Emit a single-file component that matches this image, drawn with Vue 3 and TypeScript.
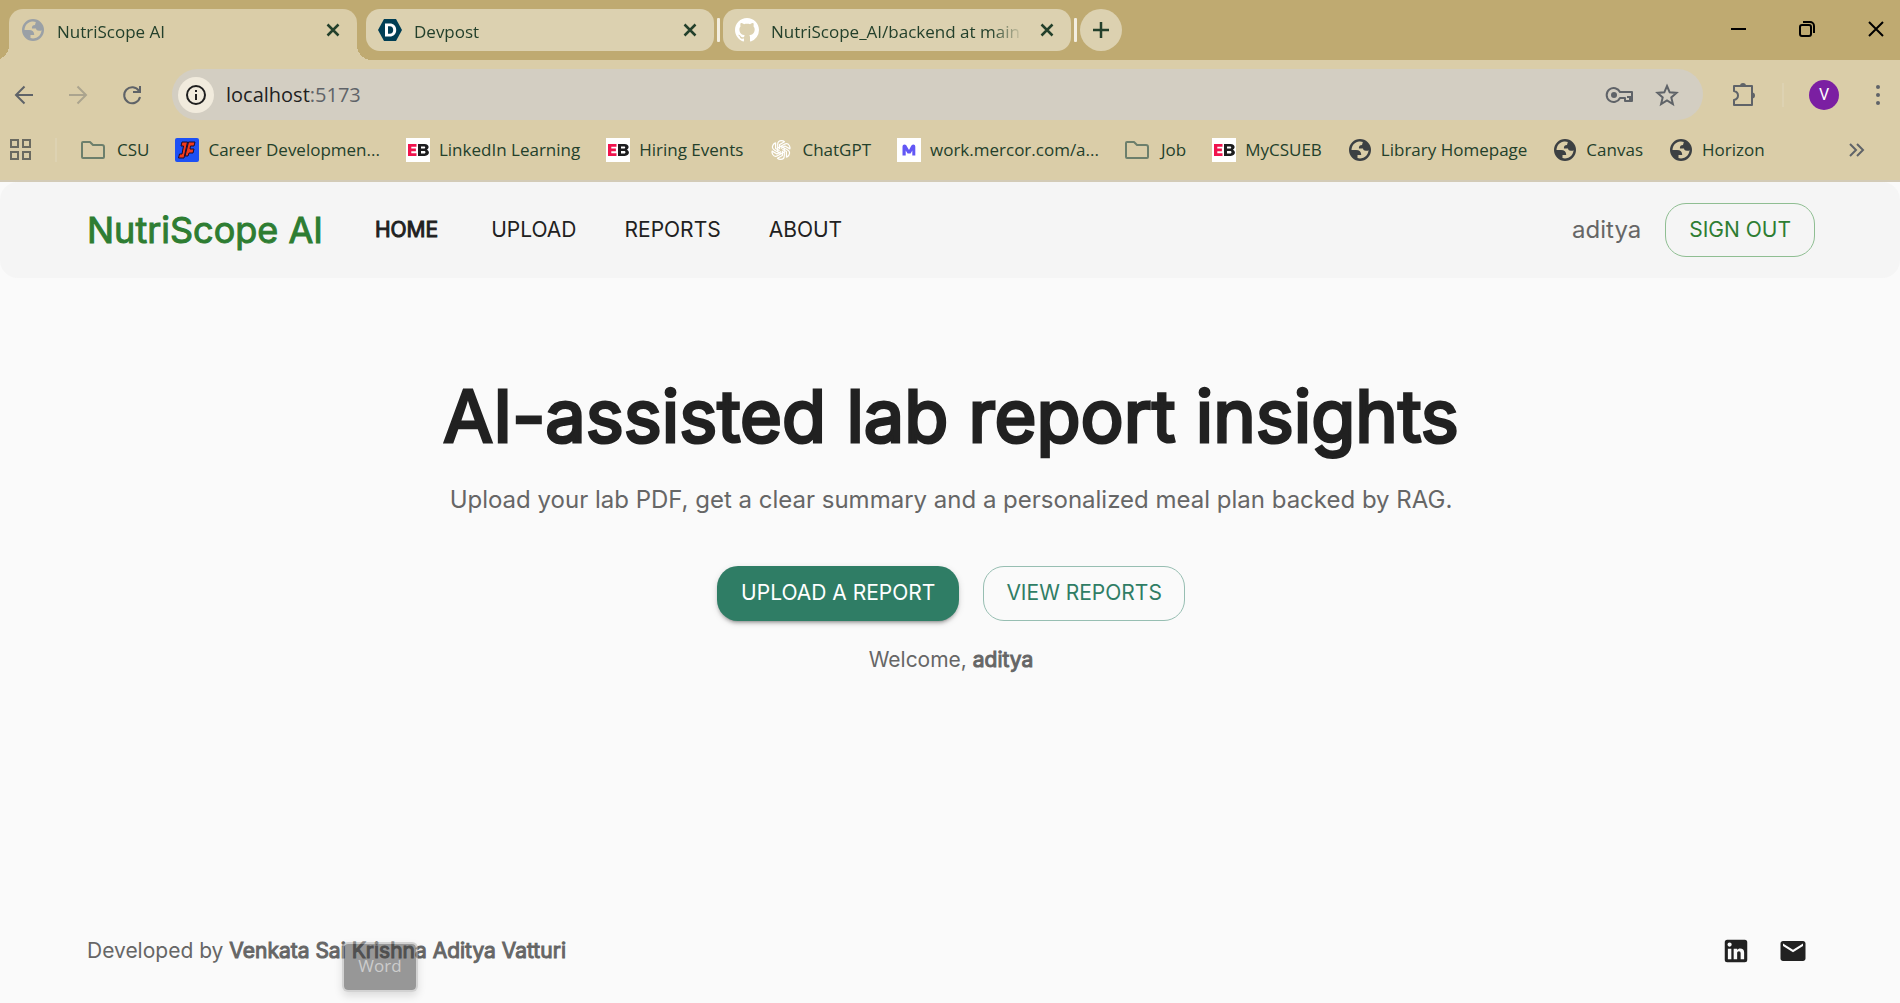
<script setup lang="ts">
import { ref } from 'vue'

type IconKind = 'globe' | 'devpost' | 'github' | 'folder' | 'career' | 'eb' | 'openai' | 'mercor'

interface Tab {
  title: string
  icon: IconKind
  active?: boolean
}

interface Bookmark {
  label: string
  icon: IconKind
}

const tabs: Tab[] = [
  { title: 'NutriScope AI', icon: 'globe', active: true },
  { title: 'Devpost', icon: 'devpost' },
  { title: 'NutriScope_AI/backend at main', icon: 'github' },
]

const bookmarks: Bookmark[] = [
  { label: 'CSU', icon: 'folder' },
  { label: 'Career Developmen...', icon: 'career' },
  { label: 'LinkedIn Learning', icon: 'eb' },
  { label: 'Hiring Events', icon: 'eb' },
  { label: 'ChatGPT', icon: 'openai' },
  { label: 'work.mercor.com/a...', icon: 'mercor' },
  { label: 'Job', icon: 'folder' },
  { label: 'MyCSUEB', icon: 'eb' },
  { label: 'Library Homepage', icon: 'globe' },
  { label: 'Canvas', icon: 'globe' },
  { label: 'Horizon', icon: 'globe' },
]

const links = ['Home', 'Upload', 'Reports', 'About']
const current = ref('Home')
const user = 'aditya'
const petals = [0, 60, 120, 180, 240, 300]
</script>

<template>
  <div class="window">
    <svg class="defs" width="0" height="0" aria-hidden="true">
      <symbol id="i-globe" viewBox="0 0 24 24">
        <path fill="currentColor" fill-rule="evenodd" d="M12 1a11 11 0 1 0 0 22a11 11 0 0 0 0-22zM3.500 12H8C11.600 12 13.300 13.800 13.200 17H9.500V20.100A8.500 8.500 0 0 0 20.500 12C20 12.800 19.300 13 18 12.800C15.500 12.500 15.200 11.500 15 10.500H11C10.600 8.500 11.500 7.300 14 7C14.600 5.500 14.300 4.800 15 4A8.500 8.500 0 0 0 3.500 12z" />
      </symbol>
      <symbol id="i-devpost" viewBox="0 0 24 24">
        <path fill="#003e54" d="M6 1h12l6 11-6 11H6L0 12z" />
        <path fill="#fff" fill-rule="evenodd" d="M7 5.500h4.700c4 0 6.500 2.500 6.500 6.500s-2.600 6.500-6.500 6.500H7zM10 8.300v7.400h1.800c2.200 0 3.400-1.400 3.400-3.700s-1.200-3.700-3.400-3.700z" />
      </symbol>
      <symbol id="i-github" viewBox="0 0 16 16">
        <path fill="#fff" d="M8 0C3.580 0 0 3.580 0 8c0 3.540 2.290 6.530 5.470 7.590.4.070.55-.17.55-.38 0-.19-.01-.82-.01-1.490-2.010.37-2.530-.49-2.690-.94-.09-.23-.48-.94-.82-1.130-.28-.15-.68-.52-.01-.53.63-.01 1.080.58 1.230.82.72 1.210 1.870.87 2.330.66.07-.52.28-.87.51-1.070-1.780-.2-3.640-.89-3.640-3.950 0-.87.31-1.590.82-2.150-.08-.2-.36-1.020.08-2.120 0 0 .67-.21 2.200.82.64-.18 1.320-.27 2-.27s1.360.09 2 .27c1.530-1.040 2.200-.82 2.200-.82.44 1.100.16 1.920.08 2.120.51.56.82 1.270.82 2.150 0 3.070-1.870 3.750-3.650 3.950.29.25.54.73.54 1.480 0 1.070-.01 1.930-.01 2.200 0 .21.15.46.55.38A8.010 8.010 0 0 0 16 8c0-4.420-3.580-8-8-8z" />
      </symbol>
      <symbol id="i-folder" viewBox="0 0 24 24">
        <path fill="none" stroke="#6c7f6c" stroke-width="2" stroke-linejoin="round" d="M3 4h6l3 3h9a2 2 0 0 1 2 2v10a1 1 0 0 1-1 1H2a1 1 0 0 1-1-1V5a1 1 0 0 1 1-1z" />
      </symbol>
      <symbol id="i-career" viewBox="0 0 24 24">
        <rect width="24" height="24" rx="2" fill="#1c50f5" />
        <path fill="#f23a1d" stroke="#170b2e" stroke-width="1" d="M7 4h5.500L9 20H3.500l1-4H7l1.500-8H6zM13.500 4H20l-1 4h-3.500l-.5 3h4l-1 4h-4l-1 3h-3z" />
      </symbol>
      <symbol id="i-eb" viewBox="0 0 24 24">
        <path fill="#fff" d="M0 0h24v24H0z" />
        <path fill="#f0134d" d="M2 6h8.500v2.700H5.300v1.900h4.600v2.600H5.300v2.100h5.200V18H2z" />
        <path fill="#1d1d1f" fill-rule="evenodd" d="M12 6h6.500c5 0 5 4.600 2.300 5.700 3.400 1.300 2.700 6.300-2.100 6.300H12zM15 8.400v2.200h3c1.600 0 1.600-2.200 0-2.200zM15 13v2.500h3.200c1.700 0 1.700-2.500 0-2.500z" />
      </symbol>
      <symbol id="i-openai" viewBox="0 0 24 24">
        <g fill="none" stroke="#fff" stroke-width="1.200" stroke-linejoin="round">
          <path v-for="a in petals" :key="a" :transform="`rotate(${a} 12 12)`" d="M8.700 13.900V6.600Q8.700 2.600 12.500 2.600Q14.300 2.600 15.500 3.700L10.600 6.600V11.200" />
        </g>
      </symbol>
      <symbol id="i-mercor" viewBox="0 0 24 24">
        <rect width="24" height="24" fill="#fff" />
        <path fill="#6257f5" d="M5.500 17.500V8.500q0-2 2-2t2.300 1.800L12 12l2-3.700q.6-1.800 2.300-1.800 2 0 2 2v9h-3v-5l-1.700 3h-3l-1.900-3v5z" />
      </symbol>
      <symbol id="i-close" viewBox="0 0 24 24">
        <path fill="none" stroke="currentColor" stroke-width="2.500" d="M6.500 6.500l11 11M17.500 6.500l-11 11" />
      </symbol>
    </svg>

    <header class="chrome">
      <div class="tabstrip">
        <div v-for="tab in tabs" :key="tab.title" class="tab" :class="{ active: tab.active }">
          <svg class="fav" aria-hidden="true"><use :href="'#i-' + tab.icon" /></svg>
          <span class="tab-title">{{ tab.title }}</span>
          <button class="icon-btn" :aria-label="'Close ' + tab.title"><svg width="24" height="24"><use href="#i-close" /></svg></button>
        </div>
        <button class="new-tab" aria-label="New tab">
          <svg width="24" height="24" viewBox="0 0 24 24"><path stroke="currentColor" stroke-width="2.500" d="M12 4v16M4 12h16" /></svg>
        </button>
        <div class="controls">
          <button class="icon-btn" aria-label="Minimize"><svg width="24" height="24" viewBox="0 0 24 24"><path stroke="#000" stroke-width="2" d="M5 12h15" /></svg></button>
          <button class="icon-btn" aria-label="Restore"><svg width="24" height="24" viewBox="0 0 24 24"><g fill="none" stroke="#000" stroke-width="2"><rect x="5" y="8" width="11" height="11" rx="2" /><path d="M8 5h7a4 4 0 0 1 4 4v7" /></g></svg></button>
          <button class="icon-btn" aria-label="Close window"><svg width="24" height="24" viewBox="0 0 24 24"><path stroke="#000" stroke-width="2" d="M5 5l14 14M19 5L5 19" /></svg></button>
        </div>
      </div>

      <div class="toolbar">
        <div class="nav-btns">
          <button class="icon-btn" aria-label="Back"><svg width="24" height="24" viewBox="0 0 24 24"><path fill="none" stroke="#5f6368" stroke-width="2" d="M21 12H4M12.500 3.500L4 12l8.500 8.500" /></svg></button>
          <button class="icon-btn" aria-label="Forward"><svg width="24" height="24" viewBox="0 0 24 24"><path fill="none" stroke="#aba48e" stroke-width="2" d="M3 12h17M11.500 3.500L20 12l-8.500 8.500" /></svg></button>
          <button class="icon-btn" aria-label="Reload"><svg width="24" height="24" viewBox="0 0 24 24"><path fill="none" stroke="#5f6368" stroke-width="2" d="M19 8A8 8 0 1 0 20 14M20 3v6h-7" /></svg></button>
        </div>
        <div class="omnibox">
          <button class="site-info" aria-label="View site information">
            <svg width="24" height="24" viewBox="0 0 24 24"><circle cx="12" cy="12" r="9" fill="none" stroke="#1f1f1f" stroke-width="2" /><path fill="#1f1f1f" d="M11 7h2v2h-2zM11 11h2v6h-2z" /></svg>
          </button>
          <span class="url">localhost<span>:5173</span></span>
          <button class="icon-btn" aria-label="Passwords">
            <svg width="30" height="24" viewBox="0 0 30 24"><g fill="none" stroke="#5f6368" stroke-width="2"><path d="M15 9A7 7 0 1 0 15 15H20V18H27V9z" stroke-linejoin="round" /><path d="M22 14h3v4" /></g><circle cx="9" cy="12" r="3" fill="#5f6368" /></svg>
          </button>
          <button class="icon-btn" aria-label="Bookmark this page">
            <svg width="24" height="24" viewBox="0 0 24 24"><path fill="none" stroke="#5f6368" stroke-width="2" d="M12 3l2.700 6.300 6.800.6-5.200 4.500 1.600 6.700L12 17.500l-5.900 3.600 1.600-6.700L2.500 9.900l6.800-.6z" /></svg>
          </button>
        </div>
        <div class="tools">
          <button class="icon-btn" aria-label="Extensions">
            <svg width="26" height="26" viewBox="0 0 26 26"><path fill="none" stroke="#5f6368" stroke-width="2" stroke-linejoin="round" d="M3 4h18v19H3v-5q4-1 4-4.500T3 9z" /><path fill="#5f6368" d="M9 4a3 3 0 0 1 6 0zM21 10.500a3 3 0 0 1 0 6z" /></svg>
          </button>
          <span class="divider"></span>
          <button class="avatar" aria-label="Profile">V</button>
          <button class="icon-btn" aria-label="Menu"><svg width="24" height="24" viewBox="0 0 24 24" fill="#5f6368"><circle cx="12" cy="4" r="2" /><circle cx="12" cy="12" r="2" /><circle cx="12" cy="20" r="2" /></svg></button>
        </div>
      </div>

      <nav class="bookmarks" aria-label="Bookmarks">
        <button class="icon-btn" aria-label="Tab groups">
          <svg width="24" height="24" viewBox="0 0 24 24"><g fill="none" stroke="#6a6a60" stroke-width="2"><path d="M2 2h7v7H2zM14 2h7v7h-7zM2 14h7v7H2zM14 14h7v7h-7z" /></g></svg>
        </button>
        <span class="divider"></span>
        <a v-for="b in bookmarks" :key="b.label" class="bookmark" :class="b.icon" href="#">
          <svg class="fav" aria-hidden="true"><use :href="'#i-' + b.icon" /></svg><span>{{ b.label }}</span>
        </a>
        <button class="icon-btn more" aria-label="More bookmarks">
          <svg width="24" height="24" viewBox="0 0 24 24"><path fill="none" stroke="#5f6368" stroke-width="2" d="M5 6l6 6-6 6M12 6l6 6-6 6" /></svg>
        </button>
      </nav>
    </header>

    <div class="app">
      <header class="appbar">
        <a class="brand" href="#">NutriScope AI</a>
        <nav class="links" aria-label="Main">
          <a v-for="l in links" :key="l" href="#" :class="{ current: l === current }" @click.prevent="current = l">{{ l }}</a>
        </nav>
        <span class="user">{{ user }}</span>
        <button class="btn outline green">Sign out</button>
      </header>

      <main class="hero">
        <h1>AI-assisted lab report insights</h1>
        <p class="lead">Upload your lab PDF, get a clear summary and a personalized meal plan backed by RAG.</p>
        <div class="actions">
          <button class="btn solid">Upload a report</button>
          <button class="btn outline">View reports</button>
        </div>
        <p class="welcome">Welcome, <strong>{{ user }}</strong></p>
      </main>

      <footer class="footer">
        <p>Developed by <strong>Venkata Sai Krishna Aditya Vatturi</strong></p>
        <div class="social">
          <a href="#" aria-label="LinkedIn"><svg width="30" height="30" viewBox="0 0 24 24"><path fill="#212121" d="M19 3a2 2 0 0 1 2 2v14a2 2 0 0 1-2 2H5a2 2 0 0 1-2-2V5a2 2 0 0 1 2-2h14m-.5 15.500v-5.300a3.260 3.260 0 0 0-3.260-3.260c-.85 0-1.840.52-2.320 1.300v-1.110h-2.790v8.370h2.790v-4.930c0-.77.62-1.400 1.390-1.400a1.400 1.400 0 0 1 1.400 1.400v4.930h2.790M6.880 8.560a1.680 1.680 0 0 0 1.680-1.680c0-.93-.75-1.690-1.680-1.690a1.690 1.690 0 0 0-1.690 1.690c0 .93.76 1.680 1.690 1.680m1.390 9.940v-8.370H5.500v8.370h2.770z" /></svg></a>
          <a href="#" aria-label="Email"><svg width="30" height="30" viewBox="0 0 24 24"><path fill="#212121" d="M20 4H4c-1.100 0-1.990.9-1.990 2L2 18c0 1.100.9 2 2 2h16c1.100 0 2-.9 2-2V6c0-1.100-.9-2-2-2zm0 4l-8 5-8-5V6l8 5 8-5v2z" /></svg></a>
        </div>
        <div class="tooltip" role="tooltip">Word</div>
      </footer>
    </div>
  </div>
</template>

<style>
html,
body {
  margin: 0;
  background: #fafafa;
}
</style>

<style scoped>
* {
  box-sizing: border-box;
}
.window {
  display: flex;
  flex-direction: column;
  min-height: 100vh;
  font-family: Inter, sans-serif;
}
.defs {
  position: absolute;
}
button {
  margin: 0;
  padding: 0;
  border: 0;
  background: none;
  font: inherit;
  color: inherit;
}
a {
  color: inherit;
  text-decoration: none;
}
svg {
  display: block;
}
p {
  margin: 0;
}
.chrome {
  background: #dacda8;
  border-bottom: 2px solid #d3cbb7;
  color: #23402b;
  font-family: "Segoe UI", "Open Sans", "Noto Sans", sans-serif;
  font-size: 17px;
}
.icon-btn {
  display: flex;
  flex: none;
}
.fav {
  flex: none;
  width: 24px;
  height: 24px;
}
.tabstrip {
  display: flex;
  align-items: flex-start;
  height: 60px;
  padding: 9px 0 0 9px;
  background: #bfaa71;
}
.tab {
  position: relative;
  display: flex;
  align-items: center;
  width: 348px;
  height: 42px;
  margin-right: 9px;
  padding: 0 12px;
  border-radius: 14px;
  background: #dcd1b0;
}
.tab:not(.active)::after {
  content: "";
  position: absolute;
  right: -6px;
  width: 3px;
  height: 24px;
  border-radius: 1px;
  background: #f3eee0;
}
.tab.active {
  height: 51px;
  padding-bottom: 9px;
  border-radius: 14px 14px 0 0;
  background: #dacda8;
}
.tab.active::before,
.tab.active::after {
  content: "";
  position: absolute;
  bottom: 0;
  width: 15px;
  height: 15px;
}
.tab.active::before {
  right: 100%;
  background: radial-gradient(circle at 0 0, transparent 15px, #dacda8 15px);
}
.tab.active::after {
  left: 100%;
  background: radial-gradient(circle at 100% 0, transparent 15px, #dacda8 15px);
}
.tab.active .fav {
  color: #9aa0a6;
}
.tab-title {
  flex: 1;
  overflow: hidden;
  margin: 2px 8px 0 12px;
  white-space: nowrap;
  mask-image: linear-gradient(to right, #000 220px, transparent 252px);
}
.new-tab {
  display: grid;
  place-items: center;
  width: 42px;
  height: 42px;
  border-radius: 50%;
  background: #dcd1b0;
}
.controls {
  display: flex;
  gap: 45px;
  margin: 8px 12px 0 auto;
}
.toolbar {
  display: flex;
  align-items: center;
  padding: 9px 10px 0 12px;
}
.nav-btns {
  display: flex;
  gap: 30px;
}
.omnibox {
  display: flex;
  flex: 1;
  align-items: center;
  gap: 20px;
  height: 51px;
  margin-left: 28px;
  padding: 0 24px 0 6px;
  border-radius: 26px;
  background: #d3cec2;
}
.site-info {
  display: grid;
  place-items: center;
  width: 36px;
  height: 36px;
  border-radius: 50%;
  background: #f1ebdd;
}
.url {
  flex: 1;
  margin-left: -8px;
  color: #1f1f1f;
  font-size: 20px;
}
.url span {
  color: #5f6368;
}
.tools {
  display: flex;
  align-items: center;
  gap: 25px;
  margin-left: 28px;
}
.divider {
  width: 2px;
  height: 24px;
  background: #ddd2b2;
}
.avatar {
  width: 30px;
  height: 30px;
  border-radius: 50%;
  background: #7b1fa2;
  color: #fff;
  font-family: Roboto, sans-serif;
  font-size: 16px;
}
.avatar + .icon-btn {
  margin-left: 2px;
}
.bookmarks {
  display: flex;
  align-items: center;
  height: 60px;
  padding: 0 31px 0 9px;
}
.bookmarks .divider {
  margin: 0 24px 0 22px;
}
.bookmark {
  display: flex;
  align-items: center;
  gap: 9px;
  margin-right: 26px;
  white-space: nowrap;
}
.bookmark span {
  padding-bottom: 2px;
}
.bookmark.folder {
  gap: 12px;
}
.bookmark.globe .fav {
  color: #3c4043;
}
.more {
  margin-left: auto;
}
.app {
  display: flex;
  flex: 1;
  flex-direction: column;
  color: #212121;
}
.appbar {
  display: flex;
  align-items: center;
  height: 96px;
  padding: 0 85px 0 87px;
  border-radius: 18px;
  background: #f5f5f5;
}
.brand {
  color: #2e7d32;
  font-size: 36px;
  -webkit-text-stroke: 1px #2e7d32;
}
.links {
  display: flex;
  flex: 1;
  gap: 48px;
  margin-left: 52px;
  padding-bottom: 2px;
  font-size: 21px;
  text-transform: uppercase;
}
.links .current {
  margin-right: 5px;
  -webkit-text-stroke: 1px #212121;
}
.user {
  margin-right: 24px;
  padding-bottom: 2px;
  color: #666;
  font-size: 24px;
}
.btn {
  height: 54px;
  padding: 0 24px 2px;
  border-radius: 21px;
  font-size: 21px;
  text-transform: uppercase;
}
.btn.outline {
  padding: 0 22px 2px;
  border: 1px solid #97beb2;
  color: #2f7d65;
}
.btn.outline.green {
  padding: 0 23px 2px;
  border-color: #8fbe92;
  color: #2e7d32;
}
.btn.solid {
  background: #2f7d65;
  color: #fff;
  box-shadow: 0 4px 2px -3px rgba(0, 0, 0, 0.2), 0 3px 3px rgba(0, 0, 0, 0.14), 0 2px 7px rgba(0, 0, 0, 0.12);
}
.actions .btn {
  height: 55px;
}
.hero {
  display: flex;
  flex: 1;
  flex-direction: column;
  align-items: center;
  padding: 93px 0 0 2px;
  text-align: center;
}
h1 {
  margin: 0;
  font-size: 72px;
  font-weight: 400;
  line-height: 90px;
  -webkit-text-stroke: 3px #212121;
}
.lead {
  margin-top: 21px;
  color: #666;
  font-size: 24px;
  line-height: 36px;
}
.actions {
  display: flex;
  gap: 24px;
  margin-top: 48px;
}
.welcome {
  margin-top: 24px;
  color: #666;
  font-size: 21px;
  line-height: 30px;
}
strong {
  font-weight: 400;
  -webkit-text-stroke: 1px #666;
}
.footer {
  position: relative;
  display: flex;
  align-items: center;
  justify-content: space-between;
  height: 104px;
  padding: 0 92px 0 87px;
  color: #666;
  font-size: 21px;
}
.footer p {
  padding-bottom: 2px;
}
.social {
  display: flex;
  gap: 27px;
}
.tooltip {
  position: absolute;
  top: 43px;
  left: 342px;
  width: 76px;
  height: 50px;
  border: 2px solid rgba(170, 170, 170, 0.5);
  border-radius: 6px;
  background: rgba(60, 60, 60, 0.52);
  background-clip: padding-box;
  box-shadow: 0 4px 8px rgba(0, 0, 0, 0.12);
  color: #ccc;
  font-family: "Segoe UI", "Open Sans", sans-serif;
  font-size: 17px;
  line-height: 44px;
  text-align: center;
}
</style>
